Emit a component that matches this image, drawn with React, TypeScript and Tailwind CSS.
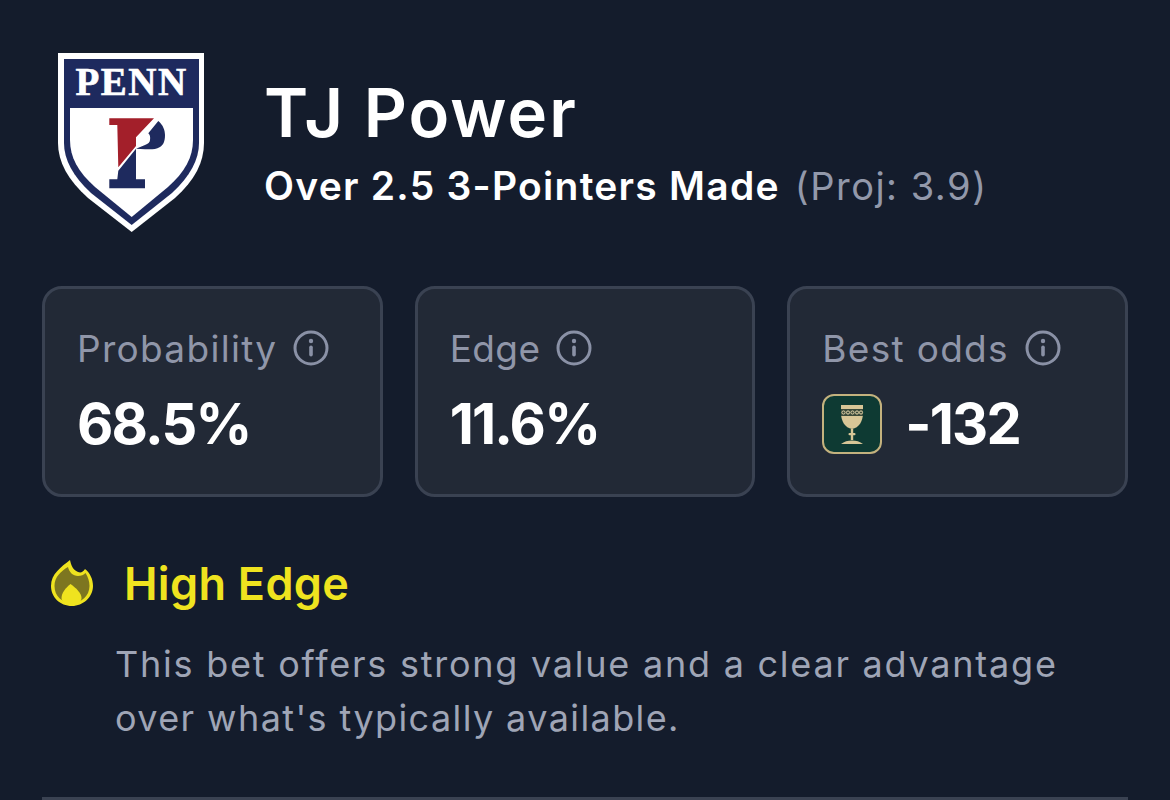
import React from "react";

function Info() {
  return (
    <svg width="36" height="36" viewBox="0 0 36 36" fill="none" className="shrink-0">
      <circle cx="18" cy="18" r="16" stroke="#8a91a6" strokeWidth="3" />
      <circle cx="18" cy="11" r="2.2" fill="#8a91a6" />
      <rect x="16.2" y="15.5" width="3.6" height="11" rx="1.8" fill="#8a91a6" />
    </svg>
  );
}

function Shield() {
  return (
    <svg width="148" height="181" viewBox="0 0 148 181" className="shrink-0">
      <path d="M1 1H147V91C147 110 138 128 118 146L74.7 180L31 146C11 128 1 110 1 91Z" fill="#ffffff" />
      <path d="M7 7H142V91C142 108 133 124 115 141L74.7 173L34 141C16 124 7 108 7 91Z" fill="#1e2a5e" />
      <path d="M13 56H136V88C136 105 128 120 111 135L74.7 165L38 135C21 120 13 105 13 88Z" fill="#ffffff" />
      <text x="74.5" y="43" textAnchor="middle" fontFamily="'Liberation Serif', serif" fontWeight="700" fontSize="39" letterSpacing="1.5" fill="#ffffff" stroke="#ffffff" strokeWidth="0.6">PENN</text>
      <path d="M52.3 66.3H97L79 85.3V94L61.3 115.3L60.3 73H52.3Z" fill="#a31f2a" />
      <path d="M101.3 69C106 73 108 78 108 83C108 90 106 93 103 95C98 98 93 97.3 88 97.3L79 96.7L61.3 118.7L60.3 127.3H52.3V136.3H88V127.3H79V96.7L88 93C91 92 93 90 93 88C93.5 85 93 83 91.3 81.3Z" fill="#1e2a5e" />
    </svg>
  );
}

function Chalice() {
  return (
    <div className="flex h-[60px] w-[60px] shrink-0 items-center justify-center rounded-[12px] border-2 border-[#c4b27e] bg-[#0e3a33]">
      <svg width="26" height="42" viewBox="0 0 26 42">
        <path d="M2 2H24V10C24 18 20 25 13 26C6 25 2 18 2 10Z" fill="#d8c697" />
        <rect x="2" y="6" width="22" height="7" fill="#3b4a3a" />
        <circle cx="4.5" cy="9.5" r="1.6" fill="none" stroke="#e2d3a9" strokeWidth="1" />
        <circle cx="9" cy="9.5" r="1.6" fill="none" stroke="#e2d3a9" strokeWidth="1" />
        <circle cx="13.5" cy="9.5" r="1.6" fill="none" stroke="#e2d3a9" strokeWidth="1" />
        <circle cx="18" cy="9.5" r="1.6" fill="none" stroke="#e2d3a9" strokeWidth="1" />
        <circle cx="22" cy="9.5" r="1.6" fill="none" stroke="#e2d3a9" strokeWidth="1" />
        <rect x="11.8" y="26" width="2.4" height="11" fill="#d8c697" />
        <rect x="9.5" y="30" width="7" height="2.2" rx="1" fill="#d8c697" />
        <path d="M2 41C5 38.5 9 37.5 13 37.5C17 37.5 21 38.5 24 41Z" fill="#d8c697" />
      </svg>
    </div>
  );
}

function Flame() {
  return (
    <svg width="44" height="50" viewBox="0 0 44 50" className="shrink-0">
      <path d="M20 1C21 6 23 11 28 13C31 14 33 13 35 10C40 14 43 20 43 27C43 38 33 47 22 47C10 47 1 38 1 27C1 15 11 8 20 1Z" fill="#efe31f" />
      <path d="M18 8C19 13 23 17 28 17C31 17 34 16 35.5 14C38 18 39.5 22 39.5 27C39.5 37 31 44 22 44C12 44 4.5 37 4.5 27C4.5 18 11 12 18 8Z" fill="#7d7620" />
      <path d="M20.5 25C26 29 31.5 34 31.5 39C31.5 43 27 46 21.5 46C16 46 11.5 43 11.5 39C11.5 34 15.5 29 20.5 25Z" fill="#efe31f" />
    </svg>
  );
}

function Card({ label, narrow, children }: { label: string; narrow?: boolean; children: React.ReactNode }) {
  return (
    <div className="flex h-[211px] flex-1 flex-col rounded-[20px] border-[3px] border-[#3a4252] bg-[#222936] pl-[32px] pt-[41px]">
      <div className="flex h-[36px] items-center gap-[16px]">
        <span className={narrow ? "text-[37px] leading-none tracking-[0.4px] text-[#9096a9]" : "text-[37px] leading-none tracking-[1.3px] text-[#9096a9]"}>{label}</span>
        <Info />
      </div>
      <div className="mt-[28px] flex h-[60px] items-center text-[56px] font-bold leading-none tracking-[-1.8px] text-white">
        {children}
      </div>
    </div>
  );
}

export default function App() {
  return (
    <div className="h-[800px] w-[1170px] overflow-hidden bg-[#141c2c] px-[42px] font-['Inter',sans-serif]">
      <div className="flex items-start pl-[15px] pt-[52px]">
        <Shield />
        <div className="ml-[59px] pt-[26px]">
          <div className="text-[67px] font-semibold leading-[70px] tracking-[2px] text-white">TJ Power</div>
          <div className="mt-[15px] text-[38px] leading-[46px] text-[#9298aa]">
            <span className="text-[39px] font-semibold tracking-[1.25px] text-white">Over 2.5 3-Pointers Made</span>
            <span className="ml-[15px] tracking-[1.5px]">(Proj: 3.9)</span>
          </div>
        </div>
      </div>
      <div className="mt-[53px] flex gap-[32px]">
        <Card label="Probability">68.5%</Card>
        <Card label="Edge" narrow>11.6%</Card>
        <Card label="Best odds">
          <Chalice />
          <span className="ml-[23px]">-132</span>
        </Card>
      </div>
      <div className="mt-[59px] flex items-center gap-[30px] pl-[8px]">
        <Flame />
        <span className="text-[45px] font-semibold leading-[56px] tracking-[0.3px] text-[#efe31f]">High Edge</span>
      </div>
      <p className="mt-[25px] pl-[73px] text-[36px] leading-[54px] tracking-[1.76px] text-[#9fa5b6]">
        This bet offers strong value and a clear advantage
        <br />
        <span className="tracking-[1.4px]">over what's typically available.</span>
      </p>
      <div className="mt-[52px] h-[3px] bg-[#3a4252]" />
    </div>
  );
}
